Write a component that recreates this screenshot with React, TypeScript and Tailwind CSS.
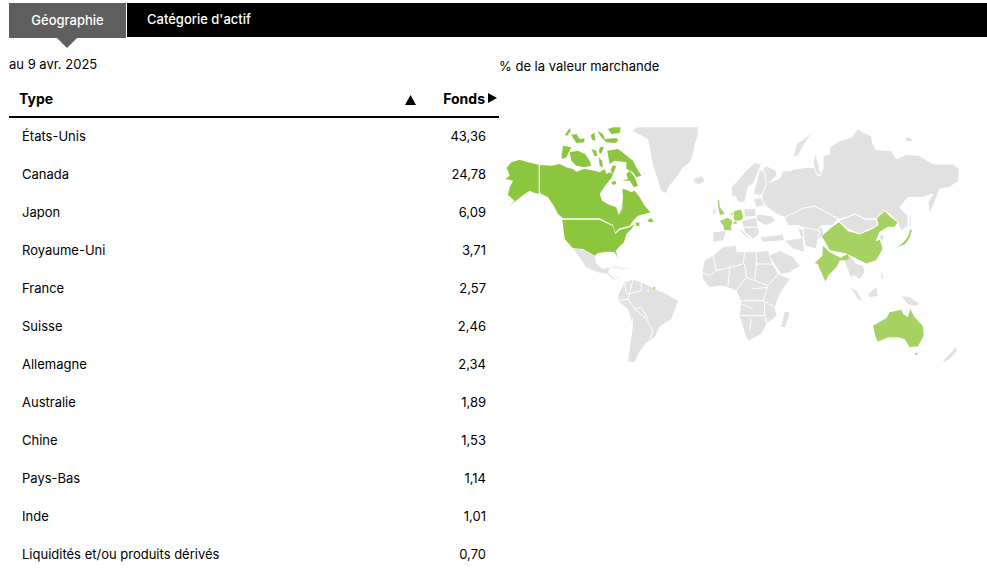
const rows = [
  ['États-Unis', '43,36'],
  ['Canada', '24,78'],
  ['Japon', '6,09'],
  ['Royaume-Uni', '3,71'],
  ['France', '2,57'],
  ['Suisse', '2,46'],
  ['Allemagne', '2,34'],
  ['Australie', '1,89'],
  ['Chine', '1,53'],
  ['Pays-Bas', '1,14'],
  ['Inde', '1,01'],
  ['Liquidités et/ou produits dérivés', '0,70'],
]

const GRAY = '#e1e1e1'
const DARK = '#8cc63f'
const LIGHT = '#a5d263'

// each group is traced in its own 3x crop coordinates, offset to the page
function Land({ fill, points, stroke = true }: { fill: string; points: string[]; stroke?: boolean }) {
  return (
    <>
      {points.map((p, i) => (
        <polygon key={i} points={p} fill={fill} stroke={stroke ? '#fff' : 'none'} strokeWidth={3} strokeLinejoin="round" />
      ))}
    </>
  )
}

function Lines({ lines }: { lines: string[] }) {
  return (
    <>
      {lines.map((p, i) => (
        <polyline key={i} points={p} fill="none" stroke="#fff" strokeWidth={3} />
      ))}
    </>
  )
}

function WorldMap() {
  return (
    <svg width={480} height={260} viewBox="505 120 480 260" className="block">
      {/* north america */}
      <g transform="translate(505 120) scale(0.3333)">
        <Land
          fill={GRAY}
          stroke={false}
          points={[
            '403,35 420,25 600,25 598,55 590,75 585,105 575,130 555,145 535,175 510,205 505,222 490,215 480,185 465,135 450,60',
            '588,180 610,172 620,185 605,195 590,192',
          ]}
        />
        <Land
          fill={DARK}
          stroke={false}
          points={[
            '25,147 40,130 65,122 90,130 122,137 122,224 110,222 95,215 80,225 60,240 35,262 50,245 30,228 35,205 45,185 22,180 35,170 30,155',
            '126,138 160,140 185,135 205,145 225,150 235,158 260,150 290,155 305,160 320,150 325,165 335,160 345,165 340,178 325,195 305,225 312,245 335,258 355,265 362,288 372,270 375,235 373,210 385,212 400,220 410,215 425,235 440,260 457,280 440,285 420,290 405,305 395,320 365,328 352,340 345,318 325,308 305,298 195,298 180,285 168,262 150,235 126,222',
            '193,302 305,302 325,312 345,322 352,345 365,333 395,325 410,315 400,330 385,345 378,370 365,382 353,395 360,418 350,400 330,398 300,402 290,410 255,390 225,388 200,360',
            '200,48 215,28 218,35 208,50',
            '220,48 235,45 245,60 260,58 258,70 235,72',
            '278,48 290,42 292,65 282,62',
            '298,35 315,45 320,60 355,57 362,65 350,72 325,70 310,55',
            '330,30 345,25 368,25 365,42 340,45',
            '190,115 195,80 220,85 205,115 195,120',
            '215,100 240,95 260,105 255,95 275,125 280,140 260,145 235,140 220,125',
            '280,90 295,95 298,110 290,112',
            '305,85 318,83 310,105 303,100',
            '302,115 312,125 315,145 305,140',
            '328,95 360,90 380,105 405,125 415,145 430,170 415,175 405,160 385,150 385,130 350,125 335,135',
            '343,140 355,140 345,165 338,155',
            '385,165 395,155 410,175 420,200 408,205 395,185 372,185 390,180',
            '448,305 458,297 468,308 455,310',
            '340,190 352,185 355,195 345,198',
            '412,312 424,310 424,322 415,320',
          ]}
        />
      </g>
      {/* mexico and south america */}
      <g transform="translate(560 240) scale(0.3333)">
        <Land
          fill={GRAY}
          stroke={false}
          points={[
            '60,28 90,32 125,52 130,75 150,90 172,85 165,100 190,125 180,120 165,105 135,100 100,85 80,55',
            '195,170 215,130 240,122 265,130 305,150 340,165 375,185 355,240 320,262 305,295 280,310 255,345 245,369 222,368 240,260 225,210 200,190',
          ]}
        />
        <Lines
          lines={[
            '240,122 225,180 245,210 280,240 300,275 290,300',
            '200,185 225,180',
            '215,130 220,165 265,155 265,130',
            '285,150 285,160',
            '240,235 225,368',
            '245,210 265,205 285,240',
          ]}
        />
        <Land fill="#f3f3f3" stroke={false} points={['165,85 190,80 240,90 200,92', '180,105 205,118 195,122']} />
        <Land fill={DARK} stroke={false} points={['300,145 307,145 305,153']} />
      </g>
      {/* asia */}
      <g transform="translate(740 120) scale(0.3333)">
        <Land
          fill={GRAY}
          points={[
            '90,150 100,140 130,155 130,172 110,190 140,178 150,155 165,155 215,145 250,145 255,172 270,150 270,110 290,105 290,85 320,65 355,55 375,28 390,40 415,50 420,75 430,92 475,95 490,120 520,105 560,110 600,135 660,135 678,150 678,185 650,205 620,210 605,250 590,285 585,250 600,225 570,235 525,235 500,265 525,290 525,320 505,335 490,305 475,290 455,275 430,300 400,300 365,285 340,295 315,300 280,280 245,262 210,268 180,285 155,295 130,285 110,270 90,255 85,230 95,205 90,185',
            '180,115 190,75 238,40 215,75 195,110',
            '240,130 248,100 255,130 265,170 250,165',
            '515,55 535,55 540,68 518,68',
            '155,295 210,268 245,262 280,280 315,300 300,320 265,320 240,345 200,320 165,320',
            '315,305 345,295 365,285 400,302 430,300 435,320 410,330 380,345 345,330',
            '195,325 240,345 265,322 275,350 245,370 205,365',
            '440,345 455,352 450,365 440,362',
            '530,290 536,278 535,325 528,320',
          ]}
        />
        <Land
          fill={LIGHT}
          points={[
            '265,352 300,320 318,308 345,335 380,345 415,330 435,318 430,298 455,275 470,290 495,310 485,325 465,325 440,340 430,365 442,360 450,390 430,425 400,435 360,415 340,405 290,395 270,360',
            '485,388 510,370 525,350 530,330 540,332 530,360 515,378',
          ]}
        />
      </g>
      {/* south asia and oceania */}
      <g transform="translate(780 240) scale(0.3333)">
        <Land
          fill={GRAY}
          stroke={false}
          points={[
            '215,65 230,50 250,75 270,80 275,100 260,120 245,110 235,110 240,130 228,100',
            '232,145 250,155 268,185 255,180',
            '285,165 310,145 315,170 290,175',
            '325,95 332,120 325,118',
            '385,172 410,175 440,195 425,200 405,195',
            '510,365 530,345 548,325 552,335 530,360 515,368',
            '25,260 35,220 48,218 38,262',
          ]}
        />
        <Land
          fill={LIGHT}
          stroke={false}
          points={[
            '125,72 148,50 150,20 170,40 215,62 200,65 190,85 165,110 158,128 140,90 135,75',
            '205,55 225,45 228,60 212,65',
            '300,260 340,238 350,220 385,212 390,225 405,235 412,210 425,235 450,262 452,290 435,322 410,325 395,300 375,295 345,295 315,308 308,295',
            '425,342 435,342 430,350',
          ]}
        />
      </g>
      {/* europe and middle east */}
      <g transform="translate(710 160) scale(0.3333)">
        <Land
          fill={GRAY}
          points={[
            '85,115 85,85 125,40 155,10 175,15 160,55 150,75 135,85 130,110 125,130 105,130 95,110',
            '160,70 170,30 185,40 190,75 175,110 150,105',
            '150,120 175,115 185,140 160,145',
            '122,150 158,148 160,172 125,175',
            '160,165 205,170 220,185 190,200 160,185',
            '115,185 160,175 165,205 120,205',
            '120,205 165,205 170,225 150,240 125,220',
            '30,218 70,215 62,245 30,250',
            '100,205 120,215 150,250 130,235',
            '170,235 240,225 245,245 180,250',
            '245,245 300,235 305,280 270,270',
            '300,205 350,215 340,270 305,260',
            '30,150 40,148 38,165 28,165',
          ]}
        />
        <Land
          fill={LIGHT}
          points={[
            '42,122 50,122 52,145 68,165 50,170 45,150',
            '48,185 75,175 90,185 85,205 88,215 62,215 60,200',
            '90,175 92,155 115,150 122,175 115,185 95,188',
            '80,165 90,158 92,172',
            '90,188 102,186 102,196 90,196',
          ]}
        />
      </g>
      {/* africa and arabia */}
      <g transform="translate(700 245) scale(0.3333)">
        <Land
          fill={GRAY}
          stroke={false}
          points={[
            '28,85 35,50 60,35 90,10 130,5 135,25 190,25 225,20 235,55 255,90 290,105 260,150 245,190 250,215 220,240 205,270 165,290 155,265 140,215 145,170 130,140 95,125 75,125 50,130 30,105',
            '230,35 260,20 300,40 320,65 290,85 265,90 245,60',
            '270,230 285,200 288,215 275,250 265,248',
          ]}
        />
        <Lines
          lines={[
            '60,35 70,80 110,70 150,60 155,25',
            '130,5 130,25',
            '190,25 190,60 240,60',
            '155,60 160,100 130,140',
            '110,70 105,125',
            '70,80 50,95 28,85',
            '190,60 185,110 160,100',
            '185,110 225,125 255,90',
            '225,125 210,170 145,170',
            '210,170 245,190',
            '175,135 225,130',
            '215,170 215,215 140,215',
            '175,225 170,260',
            '215,215 225,245',
            '145,180 180,195',
          ]}
        />
      </g>
    </svg>
  )
}

function Triangle({ dir }: { dir: 'up' | 'right' }) {
  return (
    <svg width={11} height={10} viewBox="0 0 11 10" className="block">
      <polygon points={dir === 'up' ? '5.5,0 11,10 0,10' : '1,0 10,5 1,10'} fill="#000" />
    </svg>
  )
}

export default function App() {
  return (
    <div className="min-h-screen w-[987px] overflow-hidden bg-white pt-[3px] font-[Inter,sans-serif] text-[13px] text-black">
      <div className="relative flex h-[34px] pl-[9px]">
        <div className="relative flex h-[35px] w-[117px] items-center justify-center bg-[#5e5e5e] font-medium text-white">
          Géographie
          <div className="absolute left-[48px] top-[35px] h-0 w-0 border-x-[10px] border-t-[10px] border-x-transparent border-t-[#5e5e5e]" />
        </div>
        <div className="ml-px flex flex-1 items-center bg-black pl-5 font-medium text-white">Catégorie d'actif</div>
      </div>

      <div className="flex">
        <div className="ml-[9px] w-[490px]">
          <div className="mt-[18px] h-[18px] leading-[18px]">au 9 avr. 2025</div>
          <div className="mt-[7px] flex h-[38px] items-center border-b-2 border-black pl-[10px] font-bold">
            <span className="flex-1 text-[14px]">Type</span>
            <span className="mr-[27px] mt-[3px]"><Triangle dir="up" /></span>
            <span className="text-[14px]">Fonds</span>
            <span className="ml-[2px] mr-[1px]"><Triangle dir="right" /></span>
          </div>
          {rows.map(([name, value]) => (
            <div key={name} className="flex h-[38px] items-center pl-[13px] pr-[13px]">
              <span className="flex-1">{name}</span>
              <span>{value}</span>
            </div>
          ))}
        </div>
        <div className="flex-1">
          <div className="mt-[20px] h-[18px] leading-[18px]">% de la valeur marchande</div>
          <div className="mt-[44px] -ml-px w-[480px]">
            <WorldMap />
          </div>
        </div>
      </div>
    </div>
  )
}
